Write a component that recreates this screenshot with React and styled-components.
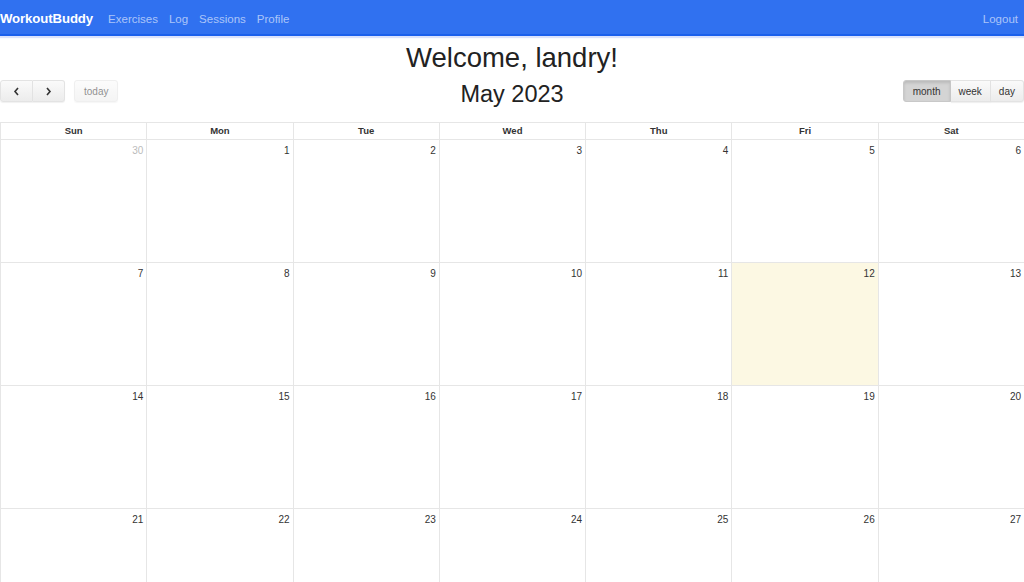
import React from "react";
import styled, { createGlobalStyle } from "styled-components";

const GlobalStyle = createGlobalStyle`
  html, body {
    margin: 0;
    padding: 0;
    background: #ffffff;
    font-family: "Liberation Sans", Arial, sans-serif;
    color: #333;
    overflow: hidden;
  }
`;

const Nav = styled.nav`
  height: 36px;
  box-sizing: border-box;
  padding: 3px 6px 0 0;
  background: #3071f0;
  border-bottom: 2px solid #1a60ec;
  box-shadow: 0 2px 1px rgba(48, 100, 240, 0.18);
  display: flex;
  align-items: center;
  justify-content: space-between;
`;

const NavLeft = styled.div`
  display: flex;
  align-items: center;
  gap: 11px;
`;

const Brand = styled.a`
  color: #ffffff;
  font-weight: 700;
  font-size: 13.2px;
  letter-spacing: -0.1px;
  margin-right: 4px;
`;

const NavLink = styled.a`
  color: rgba(255, 255, 255, 0.6);
  font-size: 11.5px;
`;

const Main = styled.main`
  padding-top: 7px;
`;

const Welcome = styled.h1`
  margin: 0;
  text-align: center;
  font-size: 27.5px;
  font-weight: 400;
  color: #222;
  line-height: 30px;
`;

const Toolbar = styled.div`
  display: flex;
  align-items: center;
  justify-content: space-between;
  margin-top: 5px;
  height: 26px;
`;

const Group = styled.div`
  display: flex;
  align-items: center;
  gap: 9px;
  width: 200px;
  justify-content: ${(p) => (p.$right ? "flex-end" : "flex-start")};
`;

const ButtonSet = styled.div`
  display: flex;
`;

const Btn = styled.button`
  height: 22px;
  padding: 0 ${(p) => p.$pad || 9}px;
  font-family: "Liberation Sans", Arial, sans-serif;
  font-size: 10px;
  color: #333;
  background: ${(p) =>
    p.$active ? "#d4d4d4" : "linear-gradient(#fafafa, #ececec)"};
  border: 1px solid #e3e3e3;
  border-color: ${(p) => (p.$active ? "#c8c8c8" : "#e3e3e3")};
  box-shadow: ${(p) =>
    p.$active
      ? "inset 0 2px 3px rgba(0,0,0,0.12)"
      : "0 1px 1px rgba(0,0,0,0.06)"};
  opacity: ${(p) => (p.$disabled ? 0.55 : 1)};
  border-radius: 0;
  &:first-child {
    border-radius: 3px 0 0 3px;
  }
  &:last-child {
    border-radius: 0 3px 3px 0;
  }
  &:only-child {
    border-radius: 3px;
  }
  & + & {
    border-left: none;
  }
`;

const Chevron = styled.svg`
  display: block;
  width: 7px;
  height: 9px;
`;

const MonthTitle = styled.h2`
  margin: 0;
  font-size: 23.5px;
  font-weight: 400;
  color: #222;
  position: relative;
  top: 3px;
`;

const Grid = styled.div`
  margin-top: 18px;
  border-top: 1px solid #e6e6e6;
  display: grid;
  grid-template-columns: repeat(7, 1fr);
`;

const HeadCell = styled.div`
  height: 16px;
  line-height: 16px;
  text-align: center;
  font-size: 9.5px;
  font-weight: 700;
  color: #333;
  border-left: 1px solid #e6e6e6;
  border-bottom: 1px solid #e6e6e6;
`;

const DayCell = styled.div`
  height: 123px;
  border-left: 1px solid #e6e6e6;
  border-bottom: 1px solid #e6e6e6;
  background: ${(p) => (p.$today ? "#fcf8e3" : "#ffffff")};
  display: flex;
  justify-content: flex-end;
  align-items: flex-start;
  padding: 5px 3px 0 0;
  box-sizing: border-box;
`;

const DayNum = styled.span`
  font-size: 10px;
  color: ${(p) => (p.$other ? "#bbb" : "#333")};
`;

const days = ["Sun", "Mon", "Tue", "Wed", "Thu", "Fri", "Sat"];

const cells = [];
cells.push({ n: 30, other: true });
for (let i = 1; i <= 27; i++) cells.push({ n: i });

const Arrow = ({ dir }) => (
  <Chevron viewBox="0 0 7 9">
    <path
      d={dir === "left" ? "M5 1 L2 4.5 L5 8" : "M2 1 L5 4.5 L2 8"}
      fill="none"
      stroke="#333"
      strokeWidth="1.6"
    />
  </Chevron>
);

export default function App() {
  return (
    <>
      <GlobalStyle />
      <Nav>
        <NavLeft>
          <Brand>WorkoutBuddy</Brand>
          <NavLink>Exercises</NavLink>
          <NavLink>Log</NavLink>
          <NavLink>Sessions</NavLink>
          <NavLink>Profile</NavLink>
        </NavLeft>
        <NavLink>Logout</NavLink>
      </Nav>
      <Main>
        <Welcome>Welcome, landry!</Welcome>
        <Toolbar>
          <Group>
            <ButtonSet>
              <Btn $pad={12}>
                <Arrow dir="left" />
              </Btn>
              <Btn $pad={12}>
                <Arrow dir="right" />
              </Btn>
            </ButtonSet>
            <ButtonSet>
              <Btn $disabled $pad={9}>today</Btn>
            </ButtonSet>
          </Group>
          <MonthTitle>May 2023</MonthTitle>
          <Group $right>
            <ButtonSet>
              <Btn $active $pad={9}>month</Btn>
              <Btn $pad={8}>week</Btn>
              <Btn $pad={8}>day</Btn>
            </ButtonSet>
          </Group>
        </Toolbar>
        <Grid>
          {days.map((d) => (
            <HeadCell key={d}>{d}</HeadCell>
          ))}
          {cells.map((c, i) => (
            <DayCell key={i} $today={c.n === 12 && !c.other}>
              <DayNum $other={c.other}>{c.n}</DayNum>
            </DayCell>
          ))}
        </Grid>
      </Main>
    </>
  );
}
